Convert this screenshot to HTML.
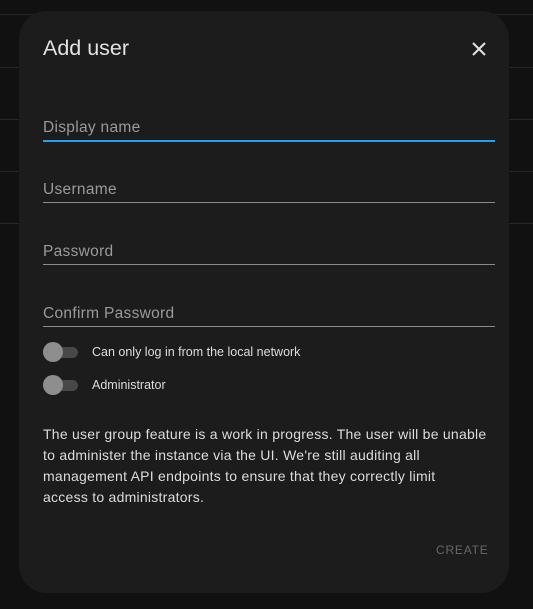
<!DOCTYPE html>
<html><head><meta charset="utf-8"><style>
html,body{margin:0;padding:0;width:533px;height:609px;background:#111;overflow:hidden;font-family:"Liberation Sans",sans-serif;}
.bgl{position:absolute;left:0;width:533px;height:1px;background:#262626;}
.dlg{position:absolute;left:19px;top:11px;width:490px;height:582px;background:#1c1c1c;border-radius:28px;}
.t{position:absolute;left:24px;top:25px;font-size:21.5px;color:#e3e3e3;}
.x{position:absolute;left:452px;top:30px;}
.f{position:absolute;left:24px;width:452px;}
.f span{position:absolute;left:0;font-size:15.5px;color:#9a9a9a;letter-spacing:0.3px;}
.f i{position:absolute;left:0;width:452px;height:1px;background:#8a8a8a;}
.tg{position:absolute;left:24px;}
.tr{position:absolute;left:0;top:-5px;width:35px;height:11px;border-radius:6px;background:#484848;}
.kn{position:absolute;left:0;top:-10px;width:20px;height:20px;border-radius:50%;background:#8e8e8e;}
.tl{position:absolute;left:49px;top:-7px;font-size:12.5px;color:#dcdcdc;white-space:nowrap;}
.p{position:absolute;left:24px;top:413px;width:470px;white-space:nowrap;font-size:14px;line-height:21px;color:#dcdcdc;letter-spacing:0.25px;}
.c{position:absolute;left:417px;top:532px;font-size:12px;color:#666;letter-spacing:0.8px;}
</style></head><body>
<div class="bgl" style="top:14px"></div>
<div class="bgl" style="top:67px"></div>
<div class="bgl" style="top:119px"></div>
<div class="bgl" style="top:171px"></div>
<div class="bgl" style="top:223px"></div>
<div class="dlg">
<div class="t">Add user</div>
<svg class="x" width="16" height="16" viewBox="0 0 16 16"><path d="M2 2L14 14M14 2L2 14" stroke="#e3e3e3" stroke-width="2"/></svg>
<div class="f" style="top:106px"><span style="top:2px">Display name</span><i style="top:23px;height:2px;background:#1fa3ec"></i></div>
<div class="f" style="top:168px"><span style="top:2px">Username</span><i style="top:23px"></i></div>
<div class="f" style="top:230px"><span style="top:2px">Password</span><i style="top:23px"></i></div>
<div class="f" style="top:292px"><span style="top:2px">Confirm Password</span><i style="top:23px"></i></div>
<div class="tg" style="top:341px"><div class="tr"></div><div class="kn"></div><div class="tl">Can only log in from the local network</div></div>
<div class="tg" style="top:374px"><div class="tr"></div><div class="kn"></div><div class="tl">Administrator</div></div>
<div class="p">The user group feature is a work in progress. The user will be unable<br>to administer the instance via the UI. We're still auditing all<br>management API endpoints to ensure that they correctly limit<br>access to administrators.</div>
<div class="c">CREATE</div>
</div>
</body></html>
